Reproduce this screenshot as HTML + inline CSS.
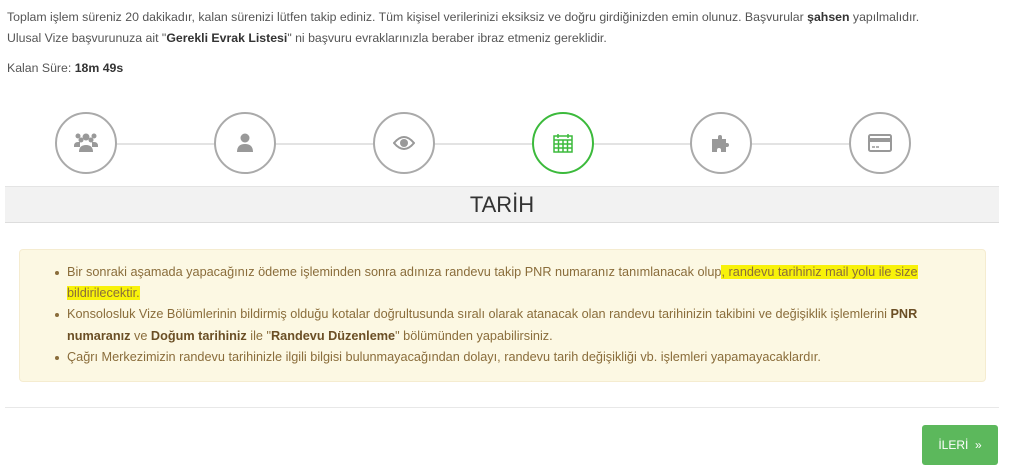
<!DOCTYPE html>
<html><head><meta charset="utf-8"><style>
body{margin:0;width:1024px;height:475px;background:#fff;font-family:"Liberation Sans",sans-serif;position:relative;overflow:hidden}
.t{position:absolute;left:7px;font-size:12.3px;color:#555;white-space:nowrap}
.t b{color:#333}
.line{position:absolute;left:86px;width:794px;top:143px;height:2px;background:#e3e3e3}
.c{position:absolute;top:112px;width:58px;height:58px;border:2px solid #aaa;border-radius:50%;background:#fff;display:flex;align-items:center;justify-content:center}
.band{position:absolute;left:5px;width:994px;top:186px;height:35px;background:#f2f2f2;border-top:1px solid #e4e4e4;border-bottom:1px solid #ddd;text-align:center;font-size:22px;line-height:36px;color:#333}
.al{position:absolute;left:19px;top:249px;width:965px;height:131px;background:#fcf8e3;border:1px solid #f5ecd0;border-radius:4px}
.li{position:absolute;left:67px;font-size:12.7px;color:#8a6d3b;white-space:nowrap}
.li b{color:#6b4f25}
.dot{position:absolute;left:55px;width:4px;height:4px;border-radius:50%;background:#8a6d3b}
.hl{background:#f8f20a}
.hr{position:absolute;left:5px;width:994px;top:407px;height:1px;background:#e8e8e8}
.btn{position:absolute;left:922px;top:425px;width:76px;height:40px;background:#5cb85c;border-radius:3px;color:#fff;font-size:12px;line-height:40px;text-align:center}
</style></head><body>
<div class="t" style="top:10px">Toplam işlem süreniz 20 dakikadır, kalan sürenizi lütfen takip ediniz. Tüm kişisel verilerinizi eksiksiz ve doğru girdiğinizden emin olunuz. Başvurular <b>şahsen</b> yapılmalıdır.</div>
<div class="t" style="top:31px">Ulusal Vize başvurunuza ait "<b>Gerekli Evrak Listesi</b>" ni başvuru evraklarınızla beraber ibraz etmeniz gereklidir.</div>
<div class="t" style="top:61px">Kalan Süre: <b>18m 49s</b></div>
<div class="line"></div>
<div class="c" style="left:55px"><svg width="26" height="22" viewBox="0 0 26 22" fill="#999"><circle cx="5" cy="4" r="2.5"/><circle cx="21" cy="4" r="2.5"/><circle cx="13" cy="5" r="3.5"/><circle cx="8" cy="8" r="2.5"/><circle cx="18" cy="8" r="2.5"/><path d="M1 14q0-4 4-4h2v5H1zM25 14q0-4-4-4h-2v5h6zM6 20q0-7 7-7t7 7z"/></svg></div>
<div class="c" style="left:214px"><svg width="18" height="20" viewBox="0 0 18 20" fill="#999"><circle cx="9" cy="5" r="4.5"/><path d="M1 19q0-8 8-8t8 8z"/></svg></div>
<div class="c" style="left:373px"><svg width="22" height="14" viewBox="0 0 22 14"><path d="M1 7q10-12 20 0q-10 12-20 0z" fill="none" stroke="#999" stroke-width="2"/><circle cx="11" cy="7" r="4" fill="#999"/></svg></div>
<div class="c" style="left:532px;border-color:#3cba3c"><svg width="20" height="20" viewBox="0 0 20 20" fill="none" stroke="#3cba3c" stroke-width="1.5"><rect x="1" y="3" width="18" height="16" fill="#fff"/><path d="M1 7h18M1 11h18M1 15h18M5.5 7v12M10 7v12M14.5 7v12M5 1v4M15 1v4" /></svg></div>
<div class="c" style="left:690px"><svg width="22" height="20" viewBox="0 0 22 20" fill="#999"><path d="M2 6h6v-2a2 2 0 1 1 4 0v2h4v4h1a2 2 0 1 1 0 4h-1v5h-5v-2a2 2 0 1 0-4 0v2H2z"/></svg></div>
<div class="c" style="left:849px"><svg width="24" height="18" viewBox="0 0 24 18"><rect x="1" y="1" width="22" height="16" rx="1.5" fill="none" stroke="#999" stroke-width="2"/><rect x="1" y="4" width="22" height="4" fill="#999"/><path d="M4 13h3M8 13h3" stroke="#999" stroke-width="1.5"/></svg></div>
<div class="band">TARİH</div>
<div class="al"></div>
<div class="dot" style="top:271px"></div>
<div class="li" style="top:265px">Bir sonraki aşamada yapacağınız ödeme işleminden sonra adınıza randevu takip PNR numaranız tanımlanacak olup<span class="hl">, randevu tarihiniz mail yolu ile size</span></div>
<div class="li" style="top:286px"><span class="hl">bildirilecektir.</span></div>
<div class="dot" style="top:313px"></div>
<div class="li" style="top:307px">Konsolosluk Vize Bölümlerinin bildirmiş olduğu kotalar doğrultusunda sıralı olarak atanacak olan randevu tarihinizin takibini ve değişiklik işlemlerini <b>PNR</b></div>
<div class="li" style="top:329px"><b>numaranız</b> ve <b>Doğum tarihiniz</b> ile "<b>Randevu Düzenleme</b>" bölümünden yapabilirsiniz.</div>
<div class="dot" style="top:356px"></div>
<div class="li" style="top:350px">Çağrı Merkezimizin randevu tarihinizle ilgili bilgisi bulunmayacağından dolayı, randevu tarih değişikliği vb. işlemleri yapamayacaklardır.</div>
<div class="hr"></div>
<div class="btn">İLERİ &nbsp;»</div>
</body></html>
